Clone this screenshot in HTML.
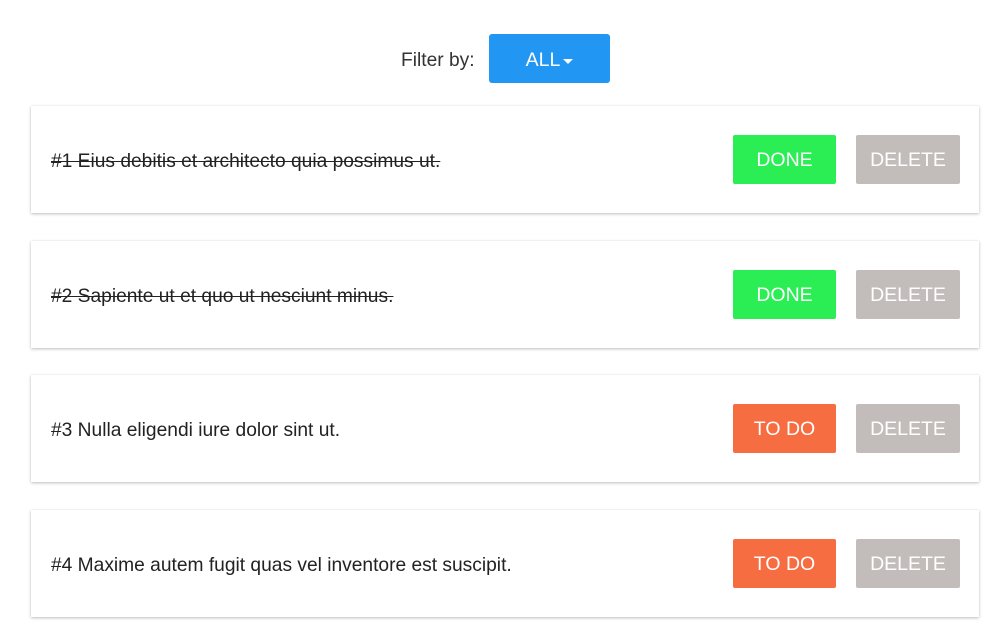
<!DOCTYPE html>
<html><head><style>
body{margin:0;background:#fff;font-family:"Liberation Sans",sans-serif;width:1001px;height:638px;overflow:hidden;position:relative;color:#222}
.filter{position:absolute;left:401px;top:50px;font-size:19.2px;color:#333}
.fbtn{position:absolute;left:489px;top:34px;width:121px;height:49px;background:#2196f3;border-radius:3px;color:#fff;font-size:19.5px;display:flex;align-items:center;justify-content:center;padding-top:3px;box-sizing:border-box}
.caret{display:inline-block;width:0;height:0;border-left:5px solid transparent;border-right:5px solid transparent;border-top:5px solid #fff;margin-left:3px;margin-top:2px}
.card{position:absolute;left:31px;width:948px;height:107px;background:#fff;box-shadow:0 1px 3px rgba(0,0,0,.25),0 0 1px rgba(0,0,0,.08)}
.t{position:absolute;left:20px;top:45px;font-size:19.2px;color:#222}
.s{text-decoration:line-through}
.b{position:absolute;top:29px;height:49px;border-radius:2px;color:#fff;font-size:19.5px;display:flex;align-items:center;justify-content:center;padding-top:2px;box-sizing:border-box}
.d{left:702px;width:103px;background:#2bee55}
.o{left:702px;width:103px;background:#f56d40}
.x{left:825px;width:104px;background:#c2bdbb}
</style></head><body>
<div class="filter">Filter by:</div>
<div class="fbtn">ALL<span class="caret"></span></div>
<div class="card" style="top:106px"><div class="t s">#1 Eius debitis et architecto quia possimus ut.</div><div class="b d">DONE</div><div class="b x">DELETE</div></div>
<div class="card" style="top:241px"><div class="t s">#2 Sapiente ut et quo ut nesciunt minus.</div><div class="b d">DONE</div><div class="b x">DELETE</div></div>
<div class="card" style="top:375px"><div class="t">#3 Nulla eligendi iure dolor sint ut.</div><div class="b o">TO DO</div><div class="b x">DELETE</div></div>
<div class="card" style="top:510px"><div class="t">#4 Maxime autem fugit quas vel inventore est suscipit.</div><div class="b o">TO DO</div><div class="b x">DELETE</div></div>
</body></html>
